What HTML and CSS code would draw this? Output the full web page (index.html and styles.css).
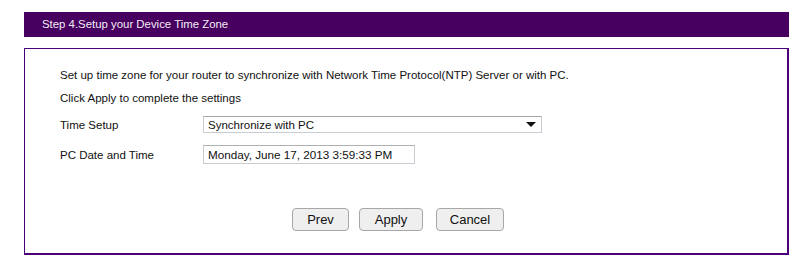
FILE: index.html
```html
<!DOCTYPE html>
<html>
<head>
<meta charset="utf-8">
<link rel="stylesheet" href="styles.css">
</head>
<body>
<div class="page">
  <div class="header">Step 4.Setup your Device Time Zone</div>
  <div class="box">
    <p class="line first">Set up time zone for your router to synchronize with Network Time Protocol(NTP) Server or with PC.</p>
    <p class="line second">Click Apply to complete the settings</p>
    <div class="row row-select">
      <span class="label">Time Setup</span>
      <div class="select">
        <span>Synchronize with PC</span>
        <svg class="arrow" width="10" height="5" viewBox="0 0 10 5"><path d="M0 0H10L5 5Z" fill="#111"/></svg>
      </div>
    </div>
    <div class="row row-input">
      <span class="label">PC Date and Time</span>
      <div class="input">Monday, June 17, 2013 3:59:33 PM</div>
    </div>
    <div class="buttons">
      <button class="btn btn-prev">Prev</button>
      <button class="btn btn-apply">Apply</button>
      <button class="btn btn-cancel">Cancel</button>
    </div>
  </div>
</div>
</body>
</html>
```

FILE: styles.css
```css
html, body {
  margin: 0;
  padding: 0;
  background: #fff;
}
body {
  font-family: "Liberation Sans", Arial, sans-serif;
  font-size: 11.5px;
  color: #111;
}
.page {
  padding: 12px 12px 0 24px;
}
.header {
  height: 25px;
  line-height: 25px;
  background: #470060;
  color: #f2eef4;
  padding-left: 18px;
  font-size: 11.4px;
}
.box {
  margin-top: 11px;
  border: 1px solid #4b0078;
  border-width: 1px 2px 2px 1px;
  padding: 0 0 0 35px;
  box-sizing: border-box;
  height: 207px;
}
.line {
  margin: 0;
  height: 14px;
  line-height: 14px;
}
.first {
  margin-top: 19px;
}
.second {
  margin-top: 9px;
}
.row {
  display: flex;
  align-items: center;
}
.label {
  width: 143px;
  flex: none;
}
.row-select {
  margin-top: 11px;
  height: 17px;
}
.select {
  width: 339px;
  height: 17px;
  box-sizing: border-box;
  border: 1px solid #c9cdd3;
  border-top-color: #a6a6a6;
  display: flex;
  align-items: center;
  justify-content: space-between;
  padding: 0 5px 0 4px;
  font-size: 11.5px;
}
.arrow {
  display: block;
}
.row-input {
  margin-top: 12px;
  height: 19px;
}
.input {
  width: 212px;
  height: 19px;
  box-sizing: border-box;
  border: 1px solid #c9cdd3;
  border-top-color: #b0b0b0;
  padding: 0 4px;
  line-height: 17px;
  font-size: 11.7px;
  white-space: nowrap;
  overflow: hidden;
}
.buttons {
  display: flex;
  margin-top: 44px;
  padding-left: 232px;
}
.btn {
  height: 23px;
  box-sizing: border-box;
  border: 1px solid #a7a7a7;
  border-radius: 4px;
  background: #efefef;
  font-family: "Liberation Sans", Arial, sans-serif;
  font-size: 13px;
  color: #111;
  padding: 0;
  margin: 0;
}
.btn-prev { width: 57px; }
.btn-apply { width: 64px; margin-left: 10px; }
.btn-cancel { width: 68px; margin-left: 13px; }
```
